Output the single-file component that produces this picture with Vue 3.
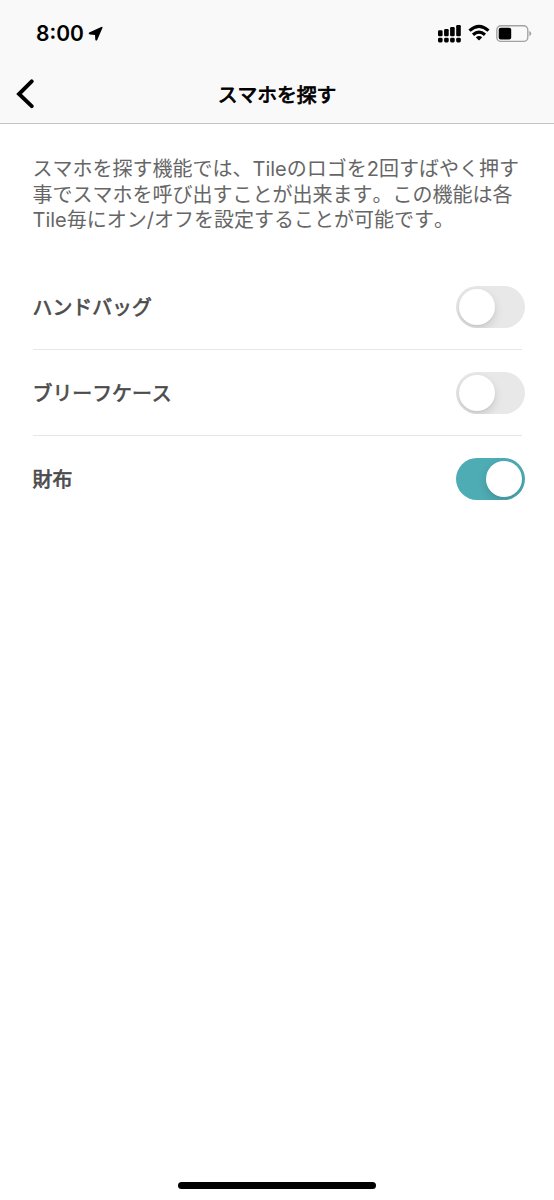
<script setup>
import { ref } from 'vue'

const tiles = ref([
  { name: 'ハンドバッグ', on: false },
  { name: 'ブリーフケース', on: false },
  { name: '財布', on: true },
])
const description = [
  'スマホを探す機能では、Tileのロゴを2回すばやく押す',
  '事でスマホを呼び出すことが出来ます。この機能は各',
  'Tile毎にオン/オフを設定することが可能です。',
]
</script>

<template>
  <div class="screen">
    <header class="top">
      <div class="status">
        <div class="clock">
          <span class="time">8:00</span>
          <svg class="arrow" width="16" height="16" viewBox="0 0 16 16">
            <path d="M1.2 6.4 L13.2 .9 Q15.1 .3 14.4 2 L9.2 13.9 Q7.8 15.4 7.3 13.8 L7 9 L2 8.6 Q-.2 7.5 1.2 6.4Z" />
          </svg>
        </div>
        <div class="indicators">
          <svg width="24" height="20" viewBox="0 0 24 20">
            <rect x="0" y="6.2" width="4.6" height="6.1" rx="1.2" />
            <rect x="6.1" y="5" width="4.6" height="7.3" rx="1.2" />
            <rect x="12.1" y="3" width="4.6" height="9.3" rx="1.2" />
            <rect x="18.2" y="1" width="4.6" height="11.3" rx="1.2" />
            <rect x="0" y="13.8" width="4.6" height="4.6" rx="1.4" />
            <rect x="6.1" y="13.8" width="4.6" height="4.6" rx="1.4" />
            <rect x="12.1" y="13.8" width="4.6" height="4.6" rx="1.4" />
            <rect x="18.2" y="13.8" width="4.6" height="4.6" rx="1.4" />
          </svg>
          <svg class="wifi" width="22" height="18" viewBox="0 0 22 18">
            <path class="wave" d="M1.5 6.6 Q11 -1.8 20.5 6.6" />
            <path class="wave" d="M5 10.8 Q11 5.6 17 10.8" />
            <path d="M7.8 13.3 Q11 10.8 14.2 13.3 L11.6 16 Q11 16.5 10.4 16Z" />
          </svg>
          <svg class="battery" width="36" height="18" viewBox="0 0 36 18">
            <rect class="shell" x=".8" y=".8" width="31" height="15.6" rx="4.2" />
            <rect x="2.7" y="2.7" width="12.5" height="11.7" rx="2" />
            <path class="tip" d="M33.3 6 Q35.3 6.8 35.3 8.6 Q35.3 10.4 33.3 11.2Z" />
          </svg>
        </div>
      </div>
      <div class="nav">
        <svg class="back" width="18" height="30" viewBox="0 0 18 30">
          <path d="M15.7 2.3 L3 15 L15.7 27.2" />
        </svg>
        <h1>スマホを探す</h1>
      </div>
    </header>
    <main>
      <p><span v-for="line in description" :key="line">{{ line }}</span></p>
      <ul>
        <li v-for="tile in tiles" :key="tile.name">
          <span class="name">{{ tile.name }}</span>
          <button
            type="button"
            role="switch"
            class="toggle"
            :class="{ on: tile.on }"
            :aria-checked="tile.on"
            :aria-label="tile.name"
            @click="tile.on = !tile.on"
          ><i /></button>
        </li>
      </ul>
    </main>
    <footer><div class="home" /></footer>
  </div>
</template>

<style>
body { margin: 0; background: #fff; }
</style>

<style scoped>
.screen {
  display: flex;
  flex-direction: column;
  width: 554px;
  height: 1200px;
  overflow: hidden;
  background: #fff;
  font-family: Inter, "Noto Sans CJK JP", sans-serif;
  font-kerning: none;
}
.top {
  box-sizing: border-box;
  flex: none;
  height: 124px;
  background: #f9f9f9;
  border-bottom: 1px solid #c4c4c4;
}
.status {
  display: flex;
  justify-content: space-between;
  height: 64px;
  padding: 0 22px 0 36px;
}
.clock { display: flex; padding-top: 20px; }
.time { font-size: 21px; line-height: 27px; font-weight: 600; width: 52px; white-space: nowrap; font-kerning: normal; }
.arrow { margin-top: 6px; }
.indicators { display: flex; align-items: flex-start; padding-top: 24px; }
.wifi { margin-left: 6px; }
.battery { margin: 1px 0 0 6px; }
.wave { fill: none; stroke: #000; stroke-width: 3.2; }
.shell { fill: none; stroke: #a3a3a3; stroke-width: 1.4; }
.tip { fill: #a3a3a3; }
.nav {
  display: grid;
  grid-template-columns: 60px 1fr 60px;
  align-items: center;
  height: 60px;
}
.back { margin-left: 16px; }
.back path {
  fill: none;
  stroke: #000;
  stroke-width: 3.9;
  stroke-linecap: round;
  stroke-linejoin: miter;
}
h1 {
  margin: 0;
  padding-top: 1px;
  text-align: center;
  font-size: 19.8px;
  line-height: 30px;
  font-weight: 400;
  -webkit-text-stroke: .8px #000;
}
main { flex: 1; padding: 33px 29px 0 32.5px; }
p {
  margin: 0;
  height: 107px;
  color: #666;
  font-size: 20px;
  line-height: 25.7px;
  white-space: nowrap;
}
p span { display: block; }
ul { margin: 0; padding: 0; list-style: none; }
li {
  position: relative;
  display: flex;
  align-items: center;
  justify-content: space-between;
  height: 86px;
  color: #4c4c4c;
  font-size: 19.9px;
}
.name { padding-bottom: 1px; -webkit-text-stroke: .7px #4c4c4c; }
li:not(:last-child)::after {
  content: "";
  position: absolute;
  left: 0;
  right: 3px;
  bottom: 0;
  height: 1.5px;
  background: #e7e7e7;
}
.toggle {
  box-sizing: border-box;
  width: 69px;
  height: 42px;
  padding: 2.5px 3px;
  border: 0;
  border-radius: 21px;
  background: #e8e8e8;
  overflow: hidden;
  display: flex;
}
.toggle i {
  width: 36px;
  height: 36px;
  border-radius: 50%;
  background: #fff;
  box-shadow: 0 4px 10px rgba(0, 0, 0, .13), 0 1px 2px rgba(0, 0, 0, .06);
}
.toggle.on { justify-content: flex-end; background: #4eacb4; }
footer { flex: none; height: 18px; display: flex; justify-content: center; }
.home { width: 198px; height: 7px; border-radius: 4px; background: #000; }
</style>
